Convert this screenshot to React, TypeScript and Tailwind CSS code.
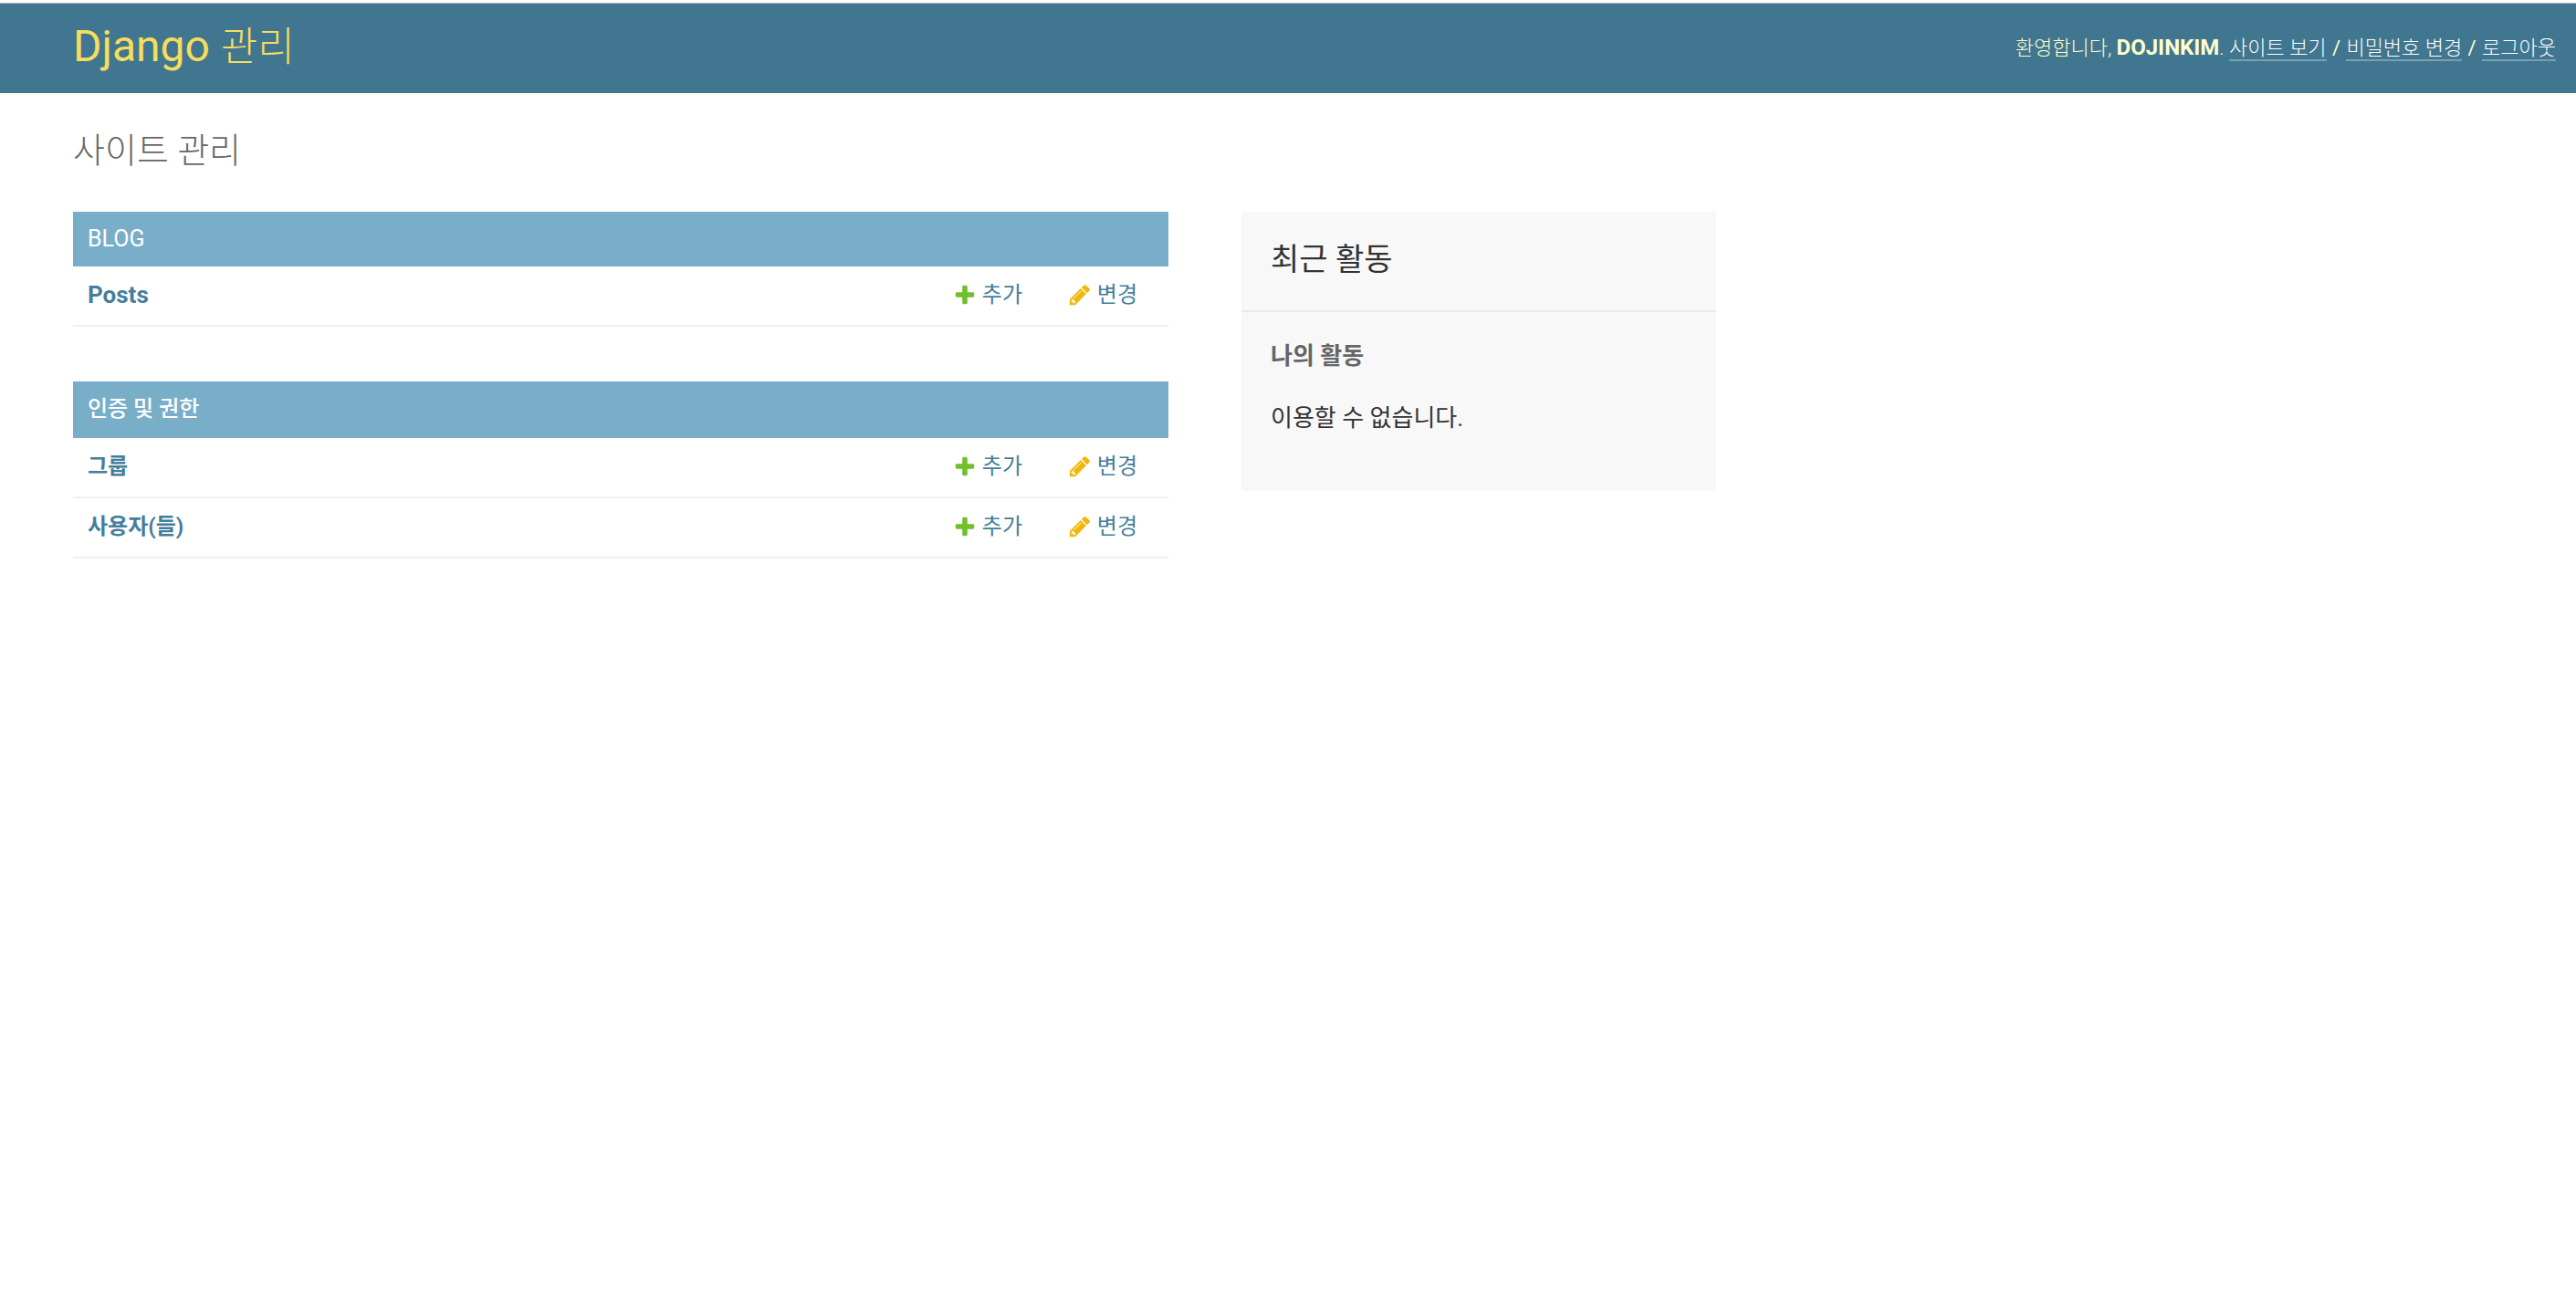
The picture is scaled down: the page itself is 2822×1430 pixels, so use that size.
import React from "react";

type Label = { text: string; latin?: boolean };
type AdminApp = { id: string; name: Label; models: Label[] };

const apps: AdminApp[] = [
  { id: "blog", name: { text: "BLOG", latin: true }, models: [{ text: "Posts", latin: true }] },
  { id: "auth", name: { text: "인증 및 권한" }, models: [{ text: "그룹" }, { text: "사용자(들)" }] },
];

function AddIcon() {
  return (
    <svg viewBox="0 0 1792 1792" className="size-[26px] shrink-0" fill="#70bf2b" aria-hidden="true">
      <path d="M1600 796v192q0 40-28 68t-68 28h-416v416q0 40-28 68t-68 28h-192q-40 0-68-28t-28-68v-416h-416q-40 0-68-28t-28-68v-192q0-40 28-68t68-28h416v-416q0-40 28-68t68-28h192q40 0 68 28t28 68v416h416q40 0 68 28t28 68z" />
    </svg>
  );
}

function ChangeIcon() {
  return (
    <svg viewBox="0 0 1792 1792" className="size-[26px] shrink-0" fill="#efb80b" aria-hidden="true">
      <path d="M491 1536l91-91-235-235-91 91v107h128v128h107zm523-928q0-22-22-22-10 0-17 7l-542 542q-7 7-7 17 0 22 22 22 10 0 17-7l542-542q7-7 7-17zm-54-192l416 416-832 832h-416v-416zm683 96q0 53-37 90l-166 166-416-416 166-165q36-38 90-38 53 0 91 38l235 234q37 39 37 91z" />
    </svg>
  );
}

function ToolLink({ children }: { children: React.ReactNode }) {
  return (
    <a href="#" className="border-b-2 border-white/30 text-white">
      {children}
    </a>
  );
}

function Slash() {
  return <span className="mx-px font-normal">/</span>;
}

function AppTable({ app }: { app: AdminApp }) {
  return (
    <table className="mb-15 w-full border-separate border-spacing-0">
      <caption
        className={
          app.name.latin
            ? "bg-[#79aec8] px-4 py-3 text-left text-[25px] leading-9 text-white"
            : "bg-[#79aec8] px-4 pt-3 pb-3.5 text-left text-2xl leading-9 font-medium text-white"
        }
      >
        {app.name.text}
      </caption>
      <tbody>
        {app.models.map((model) => (
          <tr key={model.text}>
            <th scope="row" className="h-[66px] border-b-2 border-[#eeeeee] px-4 pb-0.5 text-left font-bold">
              <a href="#" className={model.latin ? "text-[26px]" : ""}>
                {model.text}
              </a>
            </th>
            <td className="w-[126px] border-b-2 border-[#eeeeee] pr-[18px] pb-0.5 pl-4">
              <a href="#" className="flex items-center gap-1.5 whitespace-nowrap">
                <AddIcon />
                추가
              </a>
            </td>
            <td className="w-[126px] border-b-2 border-[#eeeeee] pr-[34px] pb-0.5 pl-4">
              <a href="#" className="flex items-center gap-1.5 whitespace-nowrap">
                <ChangeIcon />
                변경
              </a>
            </td>
          </tr>
        ))}
      </tbody>
    </table>
  );
}

export default function App() {
  return (
    <div className="min-h-screen bg-white font-[Roboto,'Noto_Sans_CJK_KR',sans-serif] text-2xl text-[#447e9b]">
      <div className="h-1 border-b border-[#b4b4b4] bg-white" />
      <header className="flex h-[98px] items-center justify-between bg-[#417690] pr-[22px] pb-1 pl-20 text-[#ffffcc]">
        <div className="text-5xl text-[#f5dd5d]">
          <a href="#">
            Django <span className="text-[44px] font-light">관리</span>
          </a>
        </div>
        <nav className="pt-0.5 text-[22px] leading-7 font-light" aria-label="사용자 도구">
          환영합니다, <strong className="text-2xl leading-7 font-bold">DOJINKIM</strong>.{" "}
          <ToolLink>사이트 보기</ToolLink> <Slash /> <ToolLink>비밀번호 변경</ToolLink> <Slash />{" "}
          <ToolLink>로그아웃</ToolLink>
        </nav>
      </header>
      <div className="px-20 pt-[38px]">
        <h1 className="mb-[42px] text-[38px] leading-[50px] font-light text-[#666666]">사이트 관리</h1>
        <div className="flex items-start gap-20">
          <main className="w-full max-w-[1200px]">
            {apps.map((app) => (
              <AppTable key={app.id} app={app} />
            ))}
          </main>
          <aside className="w-[520px] shrink-0 bg-[#f8f8f8] text-[26px] text-[#333333]">
            <h2 className="border-b-2 border-[#eaeaea] px-8 pt-7 pb-8 text-[34px] leading-12">최근 활동</h2>
            <h3 className="px-8 pt-7 text-[26px] leading-10 font-bold text-[#666666]">나의 활동</h3>
            <p className="px-8 pt-7 pb-15 leading-10">이용할 수 없습니다.</p>
          </aside>
        </div>
      </div>
    </div>
  );
}
